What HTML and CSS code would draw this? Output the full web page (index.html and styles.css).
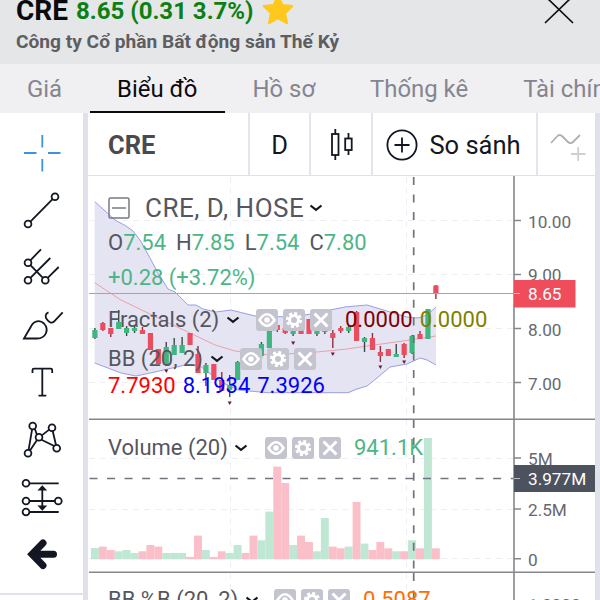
FILE: index.html
```html
<!DOCTYPE html>
<html lang="vi">
<head>
	<meta charset="UTF-8">
	<title>CRE - Biểu đồ</title>
	<link rel="stylesheet" href="styles.css">
</head>
<body>
	<!-- Icons used in the legends -->
	<svg class="sprite">
		<symbol id="eye" viewBox="0 0 22 22">
			<rect width="22" height="22" rx="3" fill="#c3c4cd"/>
			<path d="M3.500 11Q11-.5 18.500 11Q11 22.500 3.500 11Z" fill="none" stroke="#fff" stroke-width="2.600"/>
			<circle cx="11" cy="11" r="2.800" fill="#fff"/>
		</symbol>
		<symbol id="gear" viewBox="0 0 22 22">
			<rect width="22" height="22" rx="3" fill="#c3c4cd"/>
			<circle cx="11" cy="11" r="6.600" fill="none" stroke="#fff" stroke-width="3" stroke-dasharray="3 2.180"/>
			<circle cx="11" cy="11" r="4.500" fill="none" stroke="#fff" stroke-width="3"/>
		</symbol>
		<symbol id="cross" viewBox="0 0 22 22">
			<rect width="22" height="22" rx="3" fill="#c3c4cd"/>
			<path d="M4.500 4.500L17.500 17.500M17.500 4.500L4.500 17.500" stroke="#fff" stroke-width="3"/>
		</symbol>
		<symbol id="chevron" viewBox="0 0 14 8">
			<path d="M1.500 1.500L7 5.800L12.500 1.500" fill="none" stroke="#131722" stroke-width="2.200"/>
		</symbol>
	</svg>

	<div class="header">
		<div class="header-info">
			<div class="header-row">
				<span class="symbol">CRE</span>
				<span class="price">8.65 (0.31 3.7%)</span>
				<svg class="star" viewBox="0 0 32 32"><path d="M16 2L20.300 11.200L30 12.200L22.800 19L24.800 29L16 24L7.200 29L9.200 19L2 12.200L11.700 11.200Z" fill="#ffc81c" stroke="#ffc81c" stroke-width="2.500" stroke-linejoin="round"/></svg>
			</div>
			<div class="company">Công ty Cổ phần Bất động sản Thế Kỷ</div>
		</div>
		<svg class="close" viewBox="0 0 30 28"><path d="M1 0L29 27M29 0L1 27" stroke="#111" stroke-width="1.700"/></svg>
	</div>

	<div class="tabs">
		<div class="tab">Giá</div>
		<div class="tab active">Biểu đồ</div>
		<div class="tab">Hồ sơ</div>
		<div class="tab">Thống kê</div>
		<div class="tab">Tài chính</div>
	</div>

	<div class="main">
		<div class="tools">
			<svg class="tool" viewBox="0 0 44 44"><path d="M4 22H16.500M28 22H40.500M22.300 4V16.500M22.300 28V40.500" stroke="#3e92e0"/></svg>
			<svg class="tool" viewBox="0 0 44 44"><path d="M10.400 33.600L32.600 11.100"/><circle cx="8" cy="36" r="3.400"/><circle cx="35" cy="8.700" r="3.400"/></svg>
			<svg class="tool" viewBox="0 0 44 44"><path d="M10.400 15.300L21 4.300M10.400 32.900L30.300 13M27.700 32.900L38.700 22M10.400 20.100L22.900 32.900"/><circle cx="8" cy="17.700" r="3.400"/><circle cx="8" cy="35.300" r="3.400"/><circle cx="25.300" cy="35.300" r="3.400"/></svg>
			<svg class="tool" viewBox="0 0 44 44"><path d="M4 35.500L11 23.500C13.500 18 20 16.500 24 20.500C29.500 26.500 26 35.500 17 35.500ZM28.500 9.300C25 10.500 25 14 27 16.500C29.500 20 32 20.500 34 18.500L42.700 9.300"/></svg>
			<svg class="tool" viewBox="0 0 44 44"><path d="M12.500 13V10Q12.500 8.700 14 8.700H30.700Q32.200 8.700 32.200 10V13M22.300 8.700V35.700M18.500 35.700H26.300"/></svg>
			<svg class="tool" viewBox="0 0 44 44"><path d="M12.100 11.400L8.600 31.900M14.800 10.700L16.900 16.600M21.800 17.400L29.200 11.600M32.700 13L36 27M10 32.500L17 22M21.500 21.700L34.200 28"/><circle cx="12.700" cy="8" r="3.400"/><circle cx="32" cy="9.700" r="3.400"/><circle cx="19" cy="19.300" r="3.400"/><circle cx="8" cy="35.300" r="3.400"/><circle cx="36.700" cy="30.300" r="3.400"/></svg>
			<svg class="tool" viewBox="0 0 44 44"><path d="M9.400 8.300H38.700M9.400 26H35M9.400 37H38.700M22.300 13V33"/><path d="M19.500 14.500L22.300 11.500L25.100 14.500ZM19.500 31.500L22.300 34.500L25.100 31.500Z" fill="#131722"/><circle cx="6" cy="8.300" r="3.400"/><circle cx="6" cy="26" r="3.400"/><circle cx="38.300" cy="26" r="3.400"/><circle cx="6" cy="37" r="3.400"/></svg>
			<svg class="tool" viewBox="0 0 44 44"><path d="M23 11L12 22.300L23 33.500M13 22.300H33.500" stroke-width="7" stroke-linecap="round" stroke-linejoin="miter"/></svg>
		</div>

		<div class="chart-panel">
			<div class="toolbar">
				<div class="cell cell-symbol">CRE</div>
				<div class="cell cell-interval">D</div>
				<div class="cell cell-style">
					<svg width="26" height="34" viewBox="0 0 26 34" fill="none" stroke="#131722" stroke-width="1.800"><rect x="2" y="6" width="6.500" height="21"/><path d="M5.300 1V6M5.300 27V32M18.500 5V10.500M18.500 22V27"/><rect x="15.200" y="10.500" width="6.500" height="11.500"/></svg>
				</div>
				<div class="cell cell-compare">
					<svg width="32" height="32" viewBox="0 0 32 32" fill="none" stroke="#131722" stroke-width="1.800"><circle cx="16" cy="16" r="14.600"/><path d="M8.500 16H23.500M16 8.500V23.500"/></svg>
					<span>So sánh</span>
				</div>
				<div class="cell cell-indicator">
					<svg width="36" height="30" viewBox="0 0 36 30" fill="none" stroke-width="1.800"><path d="M1 10L7 3.500Q9.500 .500 12.500 3.500L18 9Q20.500 11.500 23.500 8.500L30 2" stroke="#b0b0b3"/><path d="M21 21H35.500M28.200 14V28" stroke="#cfcfd2"/></svg>
				</div>
			</div>

			<div class="chart">
				<svg id="plot" class="plot" viewBox="88 176 507 424">
					<g class="grid">
						<path d="M89 220.500H514M89 274.500H514M89 328.500H514M89 382.500H514M89 458.500H514M89 509.500H514M89 558.500H514"/>
						<path d="M230.500 177V600M406.500 177V600"/>
					</g>
					<path class="band" d="M94.700 201.500L104 210L115 220L126 226L133 231L140 240L150 258L158 273L168 289L175 292L188 305L196 305L203 309L216 312L231 310L255 316L290 317L318 313L330 310L345 307L367 305L377 308L400 315L407 317L418 318L427 315L436 307V365L427 360L420 358L407 364L390 367L377 378L367 386L357 389L348 392.700H268L238 390L221 382L200 366L185 365L155 372L136 376L121 373L94.700 363Z"/>
					<path class="band-line" d="M94.700 201.500L104 210L115 220L126 226L133 231L140 240L150 258L158 273L168 289L175 292L188 305L196 305L203 309L216 312L231 310L255 316L290 317L318 313L330 310L345 307L367 305L377 308L400 315L407 317L418 318L427 315L436 307"/>
					<path class="band-line" d="M94.700 363L121 373L136 376L155 372L185 365L200 366L221 382L238 390L268 392.700H348L357 389L367 386L377 378L390 367L407 364L420 358L427 360L436 365"/>
					<path class="basis" d="M94.700 282.700L121 300L148 313L160 319L188 332L215 345L235 351L270 355L317 352L347 349L367 346L403 341L436 336"/>
					<g id="candles"></g>
					<g id="fractals"></g>
					<g id="volume"></g>
					<rect class="price-line" x="89" y="293" width="425" height="1"/>
					<path class="cursor" d="M413.700 177V419M413.700 420V572M413.700 573V600M89.500 478.500H514"/>
					<g class="frame">
						<path d="M89 419.300H595M89 572.300H595M514 176V600"/>
						<path d="M514 220.500H521M514 274.500H521M514 328.500H521M514 382.500H521M514 458H521M514 509H521M514 558.700H521"/>
					</g>
					<g class="axis">
						<text x="528" y="227.500">10.00</text>
						<text x="528" y="281">9.00</text>
						<text x="528" y="335.500">8.00</text>
						<text x="528" y="389.500">7.00</text>
						<text x="528" y="464.500">5M</text>
						<text x="528" y="516">2.5M</text>
						<text x="528" y="566">0</text>
						<text x="528" y="611">1.0000</text>
					</g>
					<rect x="514" y="280" width="61.500" height="27.500" fill="#ef4c5c"/>
					<rect x="514" y="465" width="81" height="27" fill="#4c525e"/>
					<path d="M514 293.500H520M514 478.500H520" fill="none" stroke="#fff" opacity=".6"/>
					<g class="axis-tag">
						<text x="528" y="299.500">8.65</text>
						<text x="528" y="484.500">3.977M</text>
					</g>
				</svg>

				<div class="legend legend-main">
					<div class="legend-title">
						<svg class="collapse" viewBox="0 0 22 22"><rect x="1" y="1" width="20" height="20" rx="1.500"/><path d="M4 11H18"/></svg>
						<span>CRE, D, HOSE</span>
						<svg class="chev"><use href="#chevron"/></svg>
					</div>
					<div class="legend-ohlc">
						<span>O<b>7.54</b></span><span>H<b>7.85</b></span><span>L<b>7.54</b></span><span>C<b>7.80</b></span>
					</div>
					<div class="legend-change">+0.28 (+3.72%)</div>
					<div class="legend-row fractals">
						<span class="name">Fractals (2)</span>
						<svg class="chev"><use href="#chevron"/></svg>
						<span class="btns"><svg><use href="#eye"/></svg><svg><use href="#gear"/></svg><svg><use href="#cross"/></svg></span>
						<span class="val maroon">0.0000</span>
						<span class="val olive">0.0000</span>
					</div>
					<div class="legend-row bb">
						<span class="name">BB (20, 2)</span>
						<svg class="chev"><use href="#chevron"/></svg>
						<span class="btns"><svg><use href="#eye"/></svg><svg><use href="#gear"/></svg><svg><use href="#cross"/></svg></span>
					</div>
					<div class="legend-values">
						<span class="red">7.7930</span>
						<span class="blue">8.1934</span>
						<span class="blue">7.3926</span>
					</div>
				</div>

				<div class="legend legend-volume">
					<div class="legend-row vol">
						<span class="name">Volume (20)</span>
						<svg class="chev"><use href="#chevron"/></svg>
						<span class="btns"><svg><use href="#eye"/></svg><svg><use href="#gear"/></svg><svg><use href="#cross"/></svg></span>
						<span class="val green">941.1K</span>
					</div>
				</div>

				<div class="legend legend-bbb">
					<div class="legend-row bbb">
						<span class="name">BB %B (20, 2)</span>
						<svg class="chev"><use href="#chevron"/></svg>
						<span class="btns"><svg><use href="#eye"/></svg><svg><use href="#gear"/></svg><svg><use href="#cross"/></svg></span>
						<span class="val amber">0.5087</span>
					</div>
				</div>
			</div>
		</div>
	</div>
	<script src="script.js"></script>
</body>
</html>
```
FILE: styles.css
```css
* {
	box-sizing: border-box;
}
body {
	margin: 0;
	width: 600px;
	height: 600px;
	overflow: hidden;
	display: flex;
	flex-direction: column;
	font-family: Roboto, sans-serif;
	background-color: #fff;
}
.sprite {
	display: none;
}

/* Header */
.header {
	display: flex;
	justify-content: space-between;
	flex: 0 0 64px;
	height: 64px;
	padding: 0 26px 0 16px;
	background-color: #e5e6e8;
}
.header-row {
	display: flex;
	height: 22px;
	line-height: 22px;
	white-space: nowrap;
}
.symbol {
	font-size: 28px;
	font-weight: 700;
	color: #0a0a0e;
	width: 60px;
}
.price {
	font-size: 24px;
	font-weight: 700;
	color: #0c8012;
	width: 186px;
}
.star {
	width: 32px;
	height: 32px;
	margin-top: -6px;
}
.company {
	margin-top: 8px;
	font-size: 19.150px;
	line-height: 24px;
	font-weight: 700;
	color: #5d5e62;
	white-space: nowrap;
}
.close {
	width: 30px;
	height: 28px;
	margin-top: -4px;
}

/* Tabs */
.tabs {
	display: flex;
	flex: 0 0 49px;
	background-color: #f0f0f2;
	white-space: nowrap;
	overflow: hidden;
}
.tab {
	flex: none;
	padding: 0 28px 0 27px;
	font-size: 23.900px;
	line-height: 51px;
	color: #85858f;
}
.tab.active {
	color: #0a0a0e;
	border-bottom: 2px solid #0a0a0e;
}

/* Drawing tools */
.main {
	display: flex;
	flex: 1;
	min-height: 0;
	background-color: #e0e1ea;
}
.tools {
	width: 83px;
	height: 480px;
	padding: 11px 0 0 20px;
	background-color: #fff;
	box-shadow: 0 2px 0 #e0e1ea, 0 10px 0 #fff;
	margin-right: 5px;
}
.tool {
	display: block;
	width: 44px;
	height: 44px;
	margin: 6.700px 0 13.400px;
	fill: none;
	stroke: #131722;
	stroke-width: 1.800;
}

/* Top toolbar of the chart */
.chart-panel {
	width: 507px;
	display: flex;
	flex-direction: column;
	background-color: #fff;
}
.toolbar {
	display: flex;
	flex: 0 0 63px;
	border-bottom: 1.500px solid #e0e1ea;
}
.cell {
	display: flex;
	align-items: center;
	justify-content: center;
	padding-top: 2px;
	border-right: 2px solid #e4e5ec;
	font-size: 25.500px;
	color: #131722;
}
.cell-symbol {
	width: 162px;
	justify-content: flex-start;
	padding-left: 20px;
	font-size: 25.500px;
	font-weight: 700;
	color: #4a4a4e;
}
.cell-interval {
	width: 61px;
}
.cell-style {
	width: 62px;
	padding-left: 4px;
}
.cell-compare {
	width: 165px;
	gap: 11px;
	padding-right: 2px;
}
.cell-indicator {
	width: 57px;
	padding-top: 7px;
	padding-left: 2px;
	border-right: none;
}

/* Chart */
.chart {
	position: relative;
	flex: 1;
	min-height: 0;
	overflow: hidden;
}
.plot {
	display: block;
	width: 507px;
	height: 424px;
}
.grid path {
	fill: none;
	stroke: #eeeff2;
	stroke-dasharray: 6 5;
}
.band {
	fill: #e5e4f2;
}
.band-line {
	fill: none;
	stroke: #9c9ce8;
}
.basis {
	fill: none;
	stroke: #eba0aa;
}
.up {
	fill: #41b581;
}
.down {
	fill: #ea4d60;
}
.wick {
	stroke: #3a4a48;
	stroke-width: 1.400;
}
.wick-down {
	stroke: #8e2f45;
	stroke-width: 1.400;
}
.vol-up {
	fill: #bfe7d3;
}
.vol-down {
	fill: #fabfc8;
}
.price-line {
	fill: #ea8593;
}
.cursor {
	fill: none;
	stroke: #70747e;
	stroke-width: 1.700;
	stroke-dasharray: 8 9.550;
}
.frame path {
	fill: none;
	stroke: #85878d;
	stroke-width: 1.600;
}
.axis text {
	font-size: 17.200px;
	fill: #66686e;
}
.axis-tag text {
	font-size: 17.200px;
	fill: #fff;
}

/* Legends lie over the chart */
.legend {
	position: absolute;
	left: 20px;
	font-size: 22px;
	color: #55565f;
	white-space: nowrap;
}
.legend-main {
	top: 14px;
}
.legend-volume {
	top: 258px;
}
.legend-bbb {
	top: 410px;
}
.legend-title {
	display: flex;
	align-items: center;
	height: 36px;
	font-size: 26px;
	letter-spacing: .5px;
}
.collapse {
	width: 22px;
	height: 22px;
	margin-right: 15px;
	fill: none;
	stroke: #777983;
	stroke-width: 1.500;
}
.chev {
	width: 14px;
	height: 8px;
	margin-left: 5px;
}
.legend-ohlc {
	display: flex;
	gap: 10px;
	line-height: 34px;
}
.legend-ohlc b {
	font-weight: 400;
	color: #4db586;
}
.legend-change {
	line-height: 36px;
	height: 34px;
	color: #4db586;
}
.legend-row {
	display: flex;
	align-items: center;
	height: 27px;
}
.legend-row .chev {
	margin: 0;
}
.legend-row.fractals {
	height: 51px;
}
.btns {
	display: flex;
	gap: 5px;
}
.btns svg {
	width: 22px;
	height: 22px;
}
.fractals .name {
	width: 118px;
}
.fractals .btns {
	margin-left: 16px;
}
.bb .name {
	width: 102px;
}
.bb .btns {
	margin-left: 16px;
}
.vol .name {
	width: 126px;
}
.vol .btns {
	margin-left: 17px;
}
.bbb .name {
	width: 137px;
}
.bbb .btns {
	margin-left: 15px;
}
.val {
	margin-left: 13px;
}
.val.olive {
	margin-left: 7px;
}
.legend-values {
	display: flex;
	gap: 7px;
	line-height: 28px;
}
.maroon {
	color: #800000;
}
.olive {
	color: #808000;
}
.red {
	color: #f00;
}
.blue {
	color: #00f;
}
.green {
	color: #4db586;
}
.amber {
	color: #ff6d00;
}
```
FILE: script.js
```js
const STEP = 7.93;
const FIRST = 90.9;
const VOLUME_BASE = 559.3;

// [up, body top, body bottom, high, low] in chart pixels
const candles = [
	[1, 330, 338, 328, 339], [0, 323, 330, 322, 331], [0, 328, 334, 328, 337], [1, 322, 329, 310, 329],
	[1, 328, 333, 326, 336], [1, 328, 331, 325, 333], [0, 330, 334, 327, 334], [0, 333, 350, 333, 350],
	[0, 349, 364, 349, 364], [1, 347, 365, 342, 365], [1, 345, 355, 338, 355], [1, 345, 353, 337, 353],
	[0, 333, 345, 333, 345], [0, 354, 373, 346, 373], [1, 365, 373, 363, 386], [0, 364, 380, 364, 380],
	[0, 380, 391, 372, 391], [1, 385, 390, 375, 397], [1, 362, 380, 361, 380], [1, 356, 363, 354, 365],
	[0, 352, 358, 350, 360], [1, 344, 356, 342, 358], [1, 331, 348, 331, 348], [0, 325, 330, 323, 332],
	[0, 328, 333, 326, 334], [1, 330, 334, 328, 336], [0, 329, 334, 329, 334], [0, 319, 334, 319, 334],
	[1, 329, 334, 328, 336], [1, 330, 332, 328, 334], [0, 333, 338, 330, 348], [0, 328, 331, 326, 333],
	[1, 327, 331, 325, 333], [0, 312, 341, 311, 341], [1, 338, 342, 337, 352], [0, 338, 350, 333, 350],
	[0, 352, 356, 346, 362], [0, 349, 356, 349, 356], [1, 354, 357, 344, 357], [0, 344, 355, 343, 358],
	[1, 336, 353, 335, 354], [0, 334, 339, 331, 339], [1, 309, 339, 309, 339], [0, 285.5, 294, 285, 299]
];

// [up, bar height]
const volume = [
	[1, 11.3], [0, 12.7], [0, 9.3], [1, 8], [1, 9.3], [1, 6.3], [0, 8], [0, 14.3], [0, 12.7], [1, 6.3], [1, 6.3],
	[1, 6.3], [0, 2.3], [0, 23.7], [1, 9.3], [0, 2.3], [0, 8], [1, 6.3], [1, 14.3], [0, 6.3], [0, 23.7], [1, 19],
	[1, 47.7], [0, 92.7], [0, 76.3], [1, 14.3], [0, 23.7], [0, 17.3], [1, 8], [1, 41.3], [0, 12.7], [0, 11],
	[1, 12.7], [0, 57.3], [1, 15.7], [0, 9.3], [0, 17.3], [0, 11], [1, 8], [0, 8], [1, 19], [0, 11], [1, 121.3], [0, 11]
];

// [bar index, y] of the fractal marks
const fractals = [[9, 371], [17, 403], [25, 343], [30, 354], [36, 367], [39, 362]];

let html = '';
candles.forEach(([up, top, bottom, high, low], i) => {
	const x = FIRST + 4 + STEP * i;
	html += `<path class="${up ? 'wick' : 'wick-down'}" d="M${x} ${high}V${low}"/>`;
	html += `<rect class="${up ? 'up' : 'down'}" x="${x - 2.6}" y="${top}" width="5.2" height="${bottom - top}"/>`;
});
document.querySelector('#candles').innerHTML = html;

html = '';
volume.forEach(([up, h], i) => {
	html += `<rect class="${up ? 'vol-up' : 'vol-down'}" x="${FIRST + STEP * i}" y="${VOLUME_BASE - h}" width="${STEP}" height="${h}"/>`;
});
document.querySelector('#volume').innerHTML = html;

html = '';
fractals.forEach(([i, y]) => {
	const x = FIRST + 4 + STEP * i;
	html += `<path fill="#6b1a35" d="M${x - 2} ${y - 1.5}H${x + 2}L${x} ${y + 2}Z"/>`;
});
document.querySelector('#fractals').innerHTML = html;
```
